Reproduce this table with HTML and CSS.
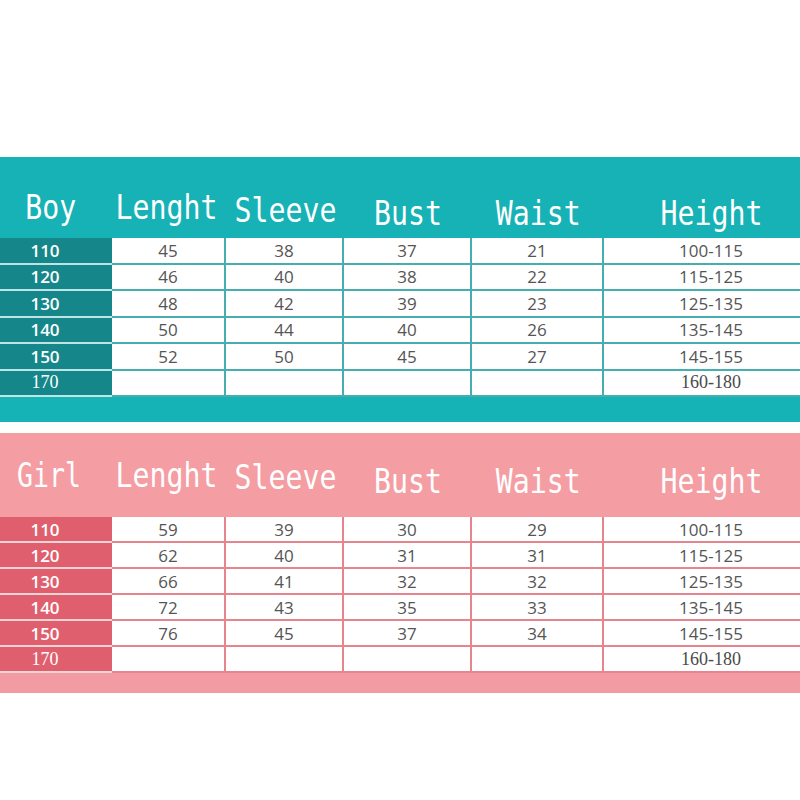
FILE: index.html
```html
<!DOCTYPE html>
<html>
<head>
<meta charset="utf-8">
<link rel="stylesheet" href="styles.css">
</head>
<body>
<div class="page">
  <section class="chart boy">
    <div class="head">
      <div class="hc first up"><span>Boy</span></div>
      <div class="hc len up"><span>Lenght</span></div>
      <div class="hc mid"><span>Sleeve</span></div>
      <div class="hc low"><span>Bust</span></div>
      <div class="hc low"><span>Waist</span></div>
      <div class="hc last low"><span>Height</span></div>
    </div>
    <div class="row"><div class="lab">110</div><div class="cell">45</div><div class="cell">38</div><div class="cell">37</div><div class="cell">21</div><div class="cell last">100-115</div></div>
    <div class="row"><div class="lab">120</div><div class="cell">46</div><div class="cell">40</div><div class="cell">38</div><div class="cell">22</div><div class="cell last">115-125</div></div>
    <div class="row"><div class="lab">130</div><div class="cell">48</div><div class="cell">42</div><div class="cell">39</div><div class="cell">23</div><div class="cell last">125-135</div></div>
    <div class="row"><div class="lab">140</div><div class="cell">50</div><div class="cell">44</div><div class="cell">40</div><div class="cell">26</div><div class="cell last">135-145</div></div>
    <div class="row"><div class="lab">150</div><div class="cell">52</div><div class="cell">50</div><div class="cell">45</div><div class="cell">27</div><div class="cell last">145-155</div></div>
    <div class="row"><div class="lab serif">170</div><div class="cell"></div><div class="cell"></div><div class="cell"></div><div class="cell"></div><div class="cell last serif">160-180</div></div>
    <div class="band"></div>
  </section>

  <section class="chart girl">
    <div class="head">
      <div class="hc first up"><span>Girl</span></div>
      <div class="hc len up"><span>Lenght</span></div>
      <div class="hc mid"><span>Sleeve</span></div>
      <div class="hc low"><span>Bust</span></div>
      <div class="hc low"><span>Waist</span></div>
      <div class="hc last low"><span>Height</span></div>
    </div>
    <div class="row"><div class="lab">110</div><div class="cell">59</div><div class="cell">39</div><div class="cell">30</div><div class="cell">29</div><div class="cell last">100-115</div></div>
    <div class="row"><div class="lab">120</div><div class="cell">62</div><div class="cell">40</div><div class="cell">31</div><div class="cell">31</div><div class="cell last">115-125</div></div>
    <div class="row"><div class="lab">130</div><div class="cell">66</div><div class="cell">41</div><div class="cell">32</div><div class="cell">32</div><div class="cell last">125-135</div></div>
    <div class="row"><div class="lab">140</div><div class="cell">72</div><div class="cell">43</div><div class="cell">35</div><div class="cell">33</div><div class="cell last">135-145</div></div>
    <div class="row"><div class="lab">150</div><div class="cell">76</div><div class="cell">45</div><div class="cell">37</div><div class="cell">34</div><div class="cell last">145-155</div></div>
    <div class="row"><div class="lab serif">170</div><div class="cell"></div><div class="cell"></div><div class="cell"></div><div class="cell"></div><div class="cell last serif">160-180</div></div>
    <div class="band"></div>
  </section>
</div>
</body>
</html>
```
FILE: styles.css
```css
* { box-sizing: border-box; }
html, body { margin: 0; padding: 0; background: #ffffff; }
body { width: 800px; height: 800px; overflow: hidden; font-family: "Open Sans", "Liberation Sans", sans-serif; }

.page { padding-top: 157px; display: flex; flex-direction: column; gap: 11px; }

.chart { width: 800px; }
.head, .row {
  display: grid;
  grid-template-columns: 112px 114px 118px 128px 132px 196px;
}

.hc {
  display: flex;
  justify-content: center;
  align-items: flex-start;
  color: #ffffff;
  font-family: "DejaVu Sans Mono", monospace;
  font-size: 34px;
  line-height: 34px;
  white-space: nowrap;
}
.hc span { display: inline-block; flex: none; transform: scaleX(0.83); transform-origin: center; }
.hc.first { padding-right: 10px; }
.hc.len { padding-right: 6px; }
.hc.last { padding-left: 18px; }

.boy .head { height: 81px; background: #17b2b5; }
.boy .hc.up { padding-top: 33px; }
.boy .hc.mid { padding-top: 36px; }
.boy .hc.low { padding-top: 39px; }

.girl .head { height: 84px; background: #f49ea4; }
.girl .hc.first { padding-top: 23px; padding-right: 14px; }
.girl .hc.first span { transform: scaleX(0.78); }
.girl .hc.up { padding-top: 25px; }
.girl .hc.mid { padding-top: 27px; }
.girl .hc.low { padding-top: 31px; }

.row { font-size: 17px; }
.boy .row { height: 26.5px; }
.girl .row { height: 26px; }

.lab, .cell {
  display: flex;
  align-items: center;
  justify-content: center;
  border-bottom: 2px solid;
}
.lab {
  color: #ffffff;
  font-weight: 600;
  padding-right: 22px;
}
.cell {
  background: #ffffff;
  color: #555555;
  border-right: 2px solid;
}
.cell.last { border-right: none; padding-left: 18px; }
.serif { font-family: "Liberation Serif", "DejaVu Serif", serif; font-weight: 400; font-size: 18px; }
.cell.serif { color: #4a4a4a; }

.boy .lab { background: #15878a; border-bottom-color: #bfe4e5; }
.boy .cell { border-color: #46aeb1; }
.girl .lab { background: #e05f6e; border-bottom-color: #f7d3d6; }
.girl .cell { border-color: #e7858e; }

.boy .row:last-of-type .lab, .boy .row:last-of-type .cell { border-bottom: none; }

.band { height: 25px; }
.boy .band { background: #16b3b6; }
.girl .band { height: 20px; background: #f29ba2; }
```
